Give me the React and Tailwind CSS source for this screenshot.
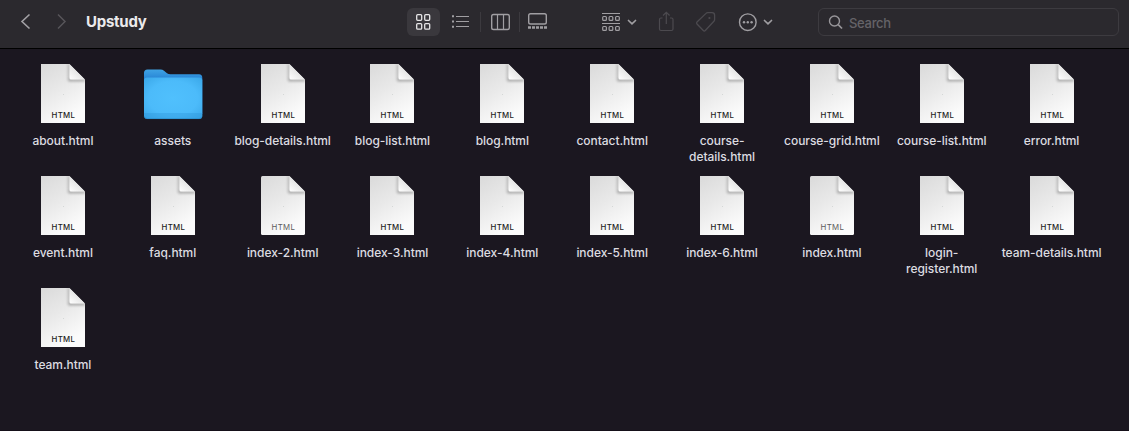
const rows = [
  ['about.html', 'assets', 'blog-details.html', 'blog-list.html', 'blog.html', 'contact.html', 'course-\ndetails.html', 'course-grid.html', 'course-list.html', 'error.html'],
  ['event.html', 'faq.html', 'index-2.html', 'index-3.html', 'index-4.html', 'index-5.html', 'index-6.html', 'index.html', 'login-\nregister.html', 'team-details.html'],
  ['team.html'],
];

const faded = ['index-2.html', 'index.html'];

function Defs() {
  return (
    <svg width="0" height="0" className="absolute">
      <defs>
        <linearGradient id="paper" x1="0" y1="0" x2="0.45" y2="1">
          <stop offset="0" stopColor="#dadada" />
          <stop offset="0.5" stopColor="#e9e9e9" />
          <stop offset="1" stopColor="#fbfbfb" />
        </linearGradient>
        <linearGradient id="fold" x1="0" y1="1" x2="0.6" y2="0.3">
          <stop offset="0" stopColor="#ffffff" />
          <stop offset="1" stopColor="#dedede" />
        </linearGradient>
        <filter id="foldShadow" x="-50%" y="-50%" width="200%" height="200%">
          <feGaussianBlur stdDeviation="1.5" />
        </filter>
        <clipPath id="sheet">
          <path d="M0 0H28.5L44 15.5V59H0Z" />
        </clipPath>
        <radialGradient id="folderFront" cx="0.5" cy="0.5" r="0.7">
          <stop offset="0" stopColor="#50c0fd" />
          <stop offset="0.6" stopColor="#4cbbfa" />
          <stop offset="1" stopColor="#3aa7e8" />
        </radialGradient>
        <linearGradient id="folderBack" x1="0" y1="0" x2="0" y2="1">
          <stop offset="0" stopColor="#3fa3e4" />
          <stop offset="0.14" stopColor="#2f8fdb" />
          <stop offset="0.25" stopColor="#2478cc" />
          <stop offset="1" stopColor="#2677c4" />
        </linearGradient>
      </defs>
    </svg>
  );
}

function FileIcon({ light }) {
  return (
    <svg width="44" height="60" viewBox="0 0 44 60">
      <g clipPath="url(#sheet)">
        <rect width="44" height="59" rx={light ? 1.5 : 0} fill="url(#paper)" />
        <path d="M28.5 0V15.5H44V17H27.5V0Z" fill="#000" opacity="0.5" filter="url(#foldShadow)" />
        <path d="M28.5 0V14Q28.5 15.5 30 15.5H44Z" fill="url(#fold)" />
      </g>
      <circle cx="22.5" cy="30.5" r="0.4" fill="#b3bbb8" />
      <text
        x="22.2"
        y={light ? 53.7 : 54}
        textAnchor="middle"
        textLength="23.4"
        fontFamily="Inter, sans-serif"
        fontSize="7.8"
        fontWeight={light ? 400 : 500}
        fill={light ? '#5c5c5c' : '#1c1c1c'}
      >
        HTML
      </text>
    </svg>
  );
}

function FolderIcon() {
  return (
    <svg width="60" height="60" viewBox="0 0 60 60">
      <path d="M1 9Q1 5.500 4.500 5.500H17.500Q19.500 5.500 21 6.800L24 9.300Q25.300 10.300 27.500 10.300H56Q59.300 10.300 59.300 14V50H1Z" fill="url(#folderBack)" />
      <path d="M1 16.500Q1 13.600 4 13.600H56.300Q59.300 13.600 59.300 16.500V51.500Q59.300 55 56 55H4.500Q1 55 1 51.500Z" fill="url(#folderFront)" />
      <path d="M1 49H59.300V51.500Q59.300 55 56 55H4.500Q1 55 1 51.500Z" fill="#2b93d6" opacity="0.35" />
      <path d="M1.300 52.500Q1.800 54.600 4.500 54.600H56Q58.600 54.600 59 52.500" fill="none" stroke="#2180c0" strokeWidth="0.700" opacity="0.7" />
    </svg>
  );
}

function Icon({ width, className, children }) {
  return (
    <svg width={width} height="24" viewBox={`0 0 ${width} 24`} fill="none" stroke="currentColor" className={`shrink-0 ${className}`}>
      {children}
    </svg>
  );
}

function Divider() {
  return <div className="h-5 w-px shrink-0 bg-[#3c3a3f]" />;
}

function Toolbar() {
  return (
    <header className="flex h-[49px] shrink-0 items-center border-b border-black bg-[#2b292e] pb-1 pl-3.5">
      <Icon width={24} className="text-[#a3a1a5]">
        <path d="M15.500 4.500L8 11.500L15.500 18.500" strokeWidth="1.600" />
      </Icon>
      <Icon width={24} className="ml-3 text-[#57555a]">
        <path d="M8 4.500L15 11.500L8 18.500" strokeWidth="1.500" />
      </Icon>
      <h1 className="ml-3 w-[321px] shrink-0 font-['Inter',sans-serif] text-[15px] leading-5 font-bold tracking-[-0.25px] text-[#ebeaec]">Upstudy</h1>

      <div className="flex h-7 w-[33px] shrink-0 items-center justify-center rounded-md bg-[#3a383d]">
        <Icon width={33} className="text-[#e6e5e7]">
          <g strokeWidth="1.300">
            <rect x="9.700" y="4.700" width="5" height="5.600" rx="1" />
            <rect x="17.700" y="4.700" width="5" height="5.600" rx="1" />
            <rect x="9.700" y="13.600" width="5" height="5.600" rx="1" />
            <rect x="17.700" y="13.600" width="5" height="5.600" rx="1" />
          </g>
        </Icon>
      </div>
      <Icon width={40} className="text-[#a09ea2]">
        <path d="M16 6.500H29M16 11.500H29M16 16.500H29" strokeWidth="1.200" />
        <path d="M12 6.200H14M12 11.500H14M12 16.800H14" strokeWidth="1.900" />
      </Icon>
      <Divider />
      <Icon width={38} className="text-[#a09ea2]">
        <rect x="10.700" y="4.500" width="17.600" height="15" rx="1.800" strokeWidth="1.400" />
        <path d="M16.500 4.500V19.500M22.500 4.500V19.500" strokeWidth="1.200" />
      </Icon>
      <Divider />
      <Icon width={36} className="text-[#a09ea2]">
        <rect x="8.700" y="3.700" width="17.600" height="10.300" rx="1.800" strokeWidth="1.400" />
        <path d="M8 17.500H27" strokeWidth="2.600" strokeDasharray="3 1" />
      </Icon>

      <Icon width={40} className="ml-11 text-[#a09ea2]">
        <path d="M2 3.500H20M2 13.500H20" strokeWidth="1.200" />
        <g strokeWidth="1.200">
          <rect x="2.700" y="6.500" width="3.700" height="3.900" rx="0.900" />
          <rect x="9.100" y="6.500" width="3.700" height="3.900" rx="0.900" />
          <rect x="15.600" y="6.500" width="3.700" height="3.900" rx="0.900" />
          <rect x="2.700" y="16.500" width="3.700" height="3.900" rx="0.900" />
          <rect x="9.100" y="16.500" width="3.700" height="3.900" rx="0.900" />
          <rect x="15.600" y="16.500" width="3.700" height="3.900" rx="0.900" />
        </g>
        <path d="M28.500 10.500L32 13.800L35.500 10.500" strokeWidth="1.700" strokeLinecap="round" />
      </Icon>
      <Icon width={20} className="ml-4 text-[#4c4a4f]">
        <path d="M6.500 8H5Q3.500 8 3.500 9.500V19Q3.500 20.500 5 20.500H15.500Q17 20.500 17 19V9.500Q17 8 15.500 8H14M10.300 14V2.500M7 5.500L10.300 2.300L13.600 5.500" strokeWidth="1.200" />
      </Icon>
      <Icon width={24} className="ml-[18px] text-[#4c4a4f]">
        <path d="M3 12L12 3.400Q12.700 2.700 13.700 2.700H18Q20.600 2.700 20.600 5.300V9.500Q20.600 10.500 19.900 11.200L11.300 20.500Q10.300 21.500 9.300 20.500L3 14Q2 13 3 12Z" strokeWidth="1.300" />
        <circle cx="15.400" cy="8" r="1.100" fill="currentColor" stroke="none" />
      </Icon>
      <Icon width={38} className="ml-5 text-[#a09ea2]">
        <circle cx="9.800" cy="12.200" r="8.300" strokeWidth="1.400" />
        <g fill="currentColor" stroke="none">
          <circle cx="6" cy="12.200" r="1.200" />
          <circle cx="9.800" cy="12.200" r="1.200" />
          <circle cx="13.600" cy="12.200" r="1.200" />
        </g>
        <path d="M26.500 10.500L30 13.800L33.500 10.500" strokeWidth="1.700" strokeLinecap="round" />
      </Icon>

      <div className="ml-[42px] flex h-7 w-[301px] shrink-0 items-center rounded-md border border-[#3d3b40] pl-[9px]">
        <Icon width={16} className="text-[#98969a]">
          <circle cx="6.500" cy="11" r="5" strokeWidth="1.400" />
          <path d="M10.200 14.700L14 18.500" strokeWidth="1.700" />
        </Icon>
        <span className="ml-[5px] pt-0.5 font-['Inter',sans-serif] text-[13px] leading-5 font-medium tracking-[-0.3px] text-[#656368]">Search</span>
      </div>
    </header>
  );
}

export default function App() {
  return (
    <div className="flex h-[431px] w-[1129px] flex-col overflow-hidden border-b border-[#151019] bg-[#1b1720]">
      <Defs />
      <Toolbar />
      <main className="flex flex-col pt-[15px] pl-2">
        {rows.map((row) => (
          <div key={row[0]} className="grid h-28 w-[1098.500px] grid-cols-10">
            {row.map((name) => (
              <div key={name} className="flex flex-col items-center">
                {name === 'assets' ? <FolderIcon /> : <FileIcon light={faded.includes(name)} />}
                <div className="mt-[9px] text-center font-['Inter',sans-serif] text-[12px] leading-4 font-medium tracking-[-0.05px] whitespace-pre text-[#dddce0]">{name}</div>
              </div>
            ))}
          </div>
        ))}
      </main>
    </div>
  );
}
